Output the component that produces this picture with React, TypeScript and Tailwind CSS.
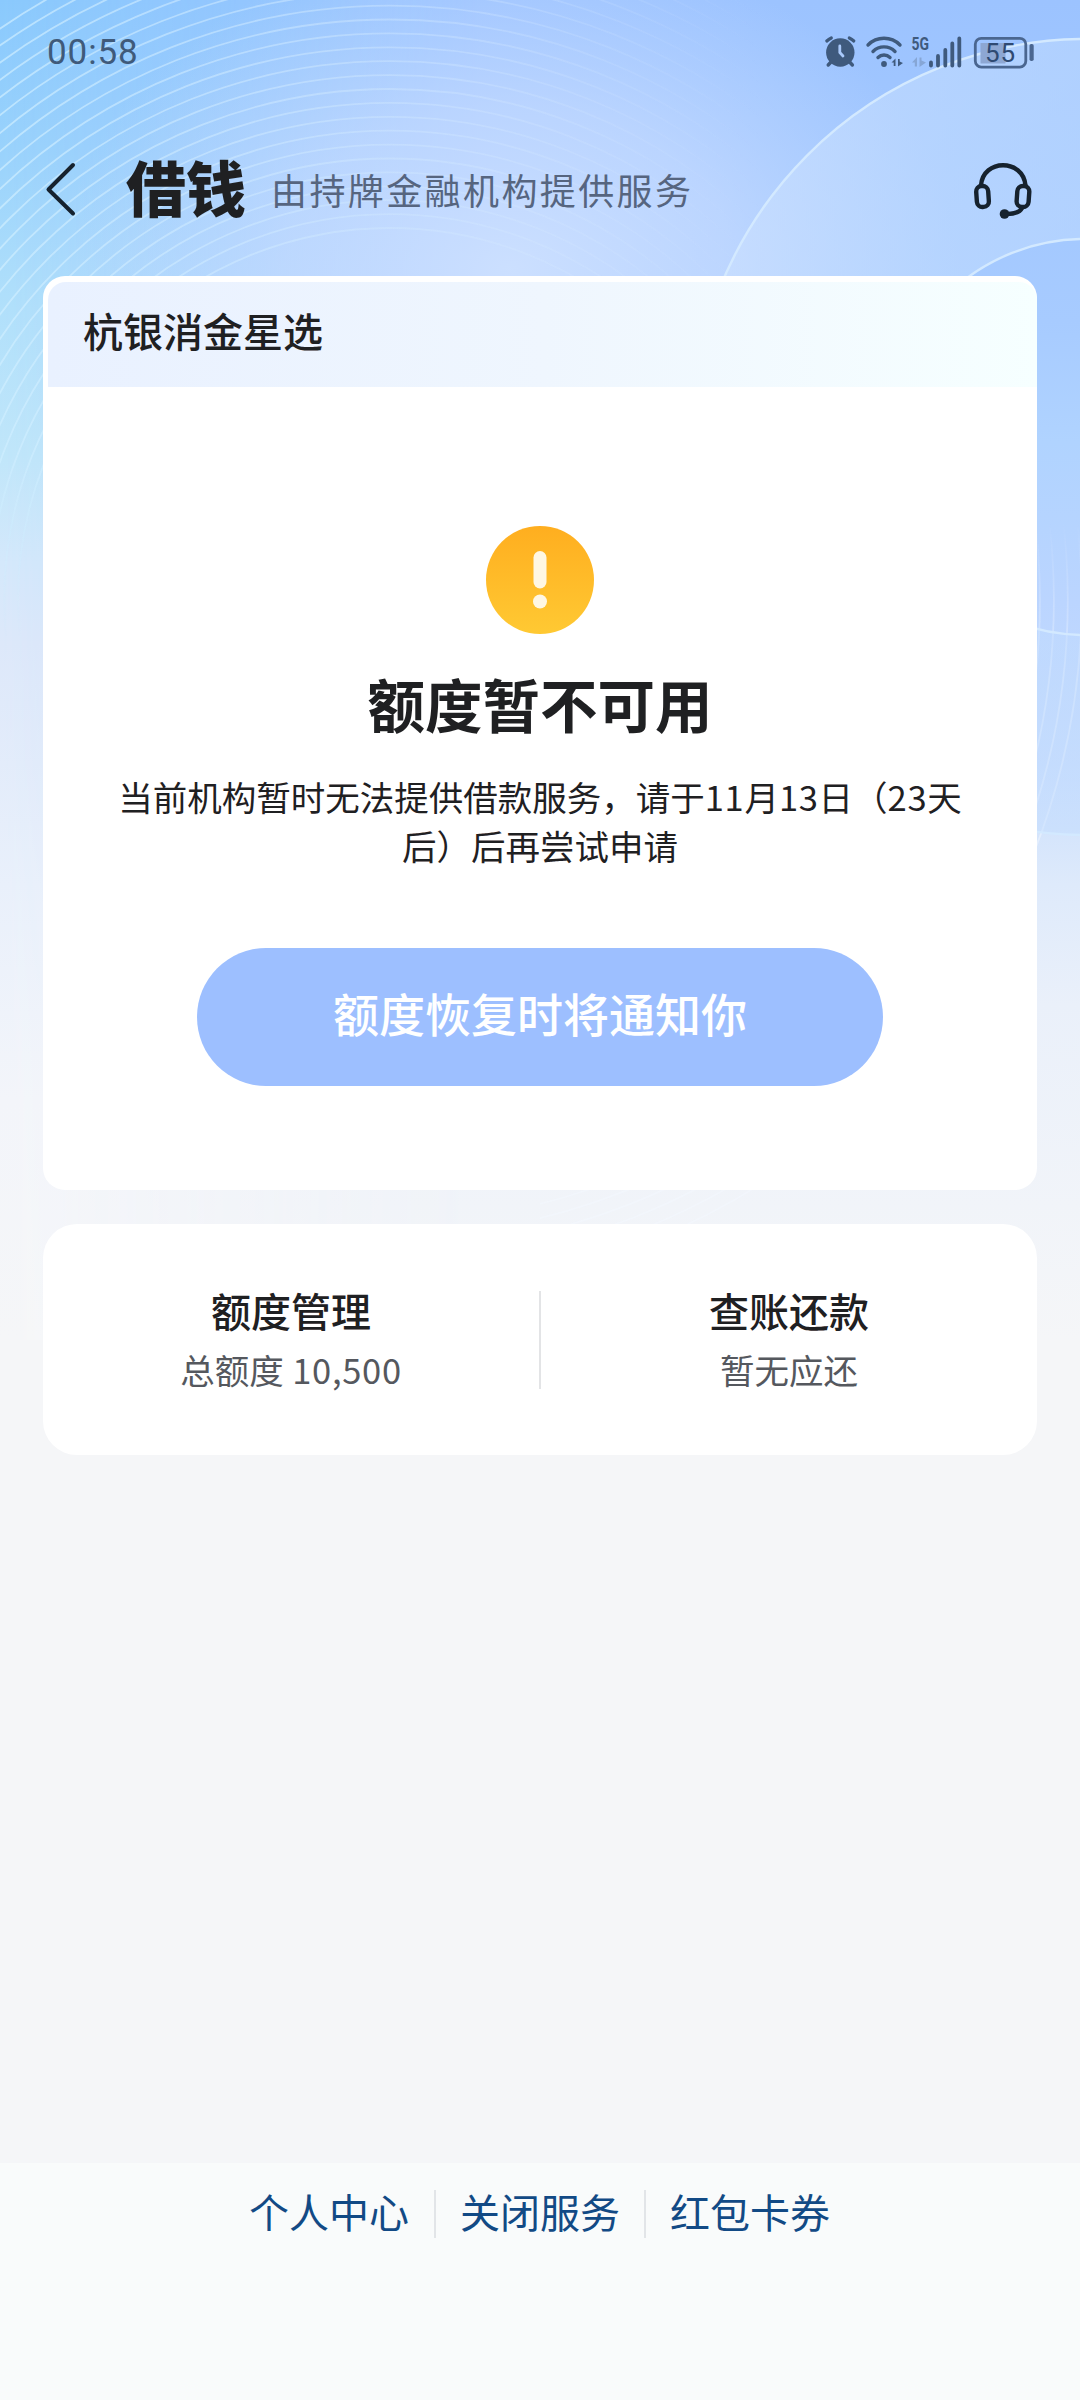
import type { ReactNode } from 'react';
import clsx from 'clsx';

const FOOTER_LINKS = ['个人中心', '关闭服务', '红包卡券'];

const ENTRIES = [
  { title: '额度管理', label: '总额度', amount: '10,500' },
  { title: '查账还款', label: '暂无应还' },
];

const RIPPLES = Array.from({ length: 24 }, (_, i) => 372 + i * 13.9);

function Backdrop() {
  return (
    <svg
      className="absolute inset-0 -z-10"
      width="1080"
      height="1340"
      viewBox="0 0 1080 1340"
      fill="none"
      aria-hidden
    >
      <defs>
        <linearGradient id="base" x1="0" y1="0" x2="0" y2="1">
          <stop offset="0" stopColor="#9cc3ff" />
          <stop offset="0.24" stopColor="#a7cbff" />
          <stop offset="0.33" stopColor="#b0d3ff" />
          <stop offset="0.45" stopColor="#bbd5ff" />
          <stop offset="0.57" stopColor="#c8ddfd" />
          <stop offset="0.66" stopColor="#deeafb" />
          <stop offset="0.75" stopColor="#eaf0fa" />
          <stop offset="0.9" stopColor="#f1f4f9" />
          <stop offset="1" stopColor="#f5f6f8" />
        </linearGradient>
        <linearGradient id="left" x1="0" y1="0" x2="0" y2="1">
          <stop offset="0" stopColor="#8ac9fd" />
          <stop offset="0.11" stopColor="#99d2fc" />
          <stop offset="0.23" stopColor="#b1e0fb" />
          <stop offset="0.34" stopColor="#c0e6fa" />
          <stop offset="0.42" stopColor="#d4e8fb" />
          <stop offset="0.48" stopColor="#dde8fa" />
          <stop offset="0.66" stopColor="#e9f0fb" />
          <stop offset="0.82" stopColor="#f3f5fa" />
          <stop offset="1" stopColor="#f5f6f8" />
        </linearGradient>
        <linearGradient id="fade" x1="0" y1="0" x2="1" y2="0">
          <stop offset="0" stopColor="#fff" />
          <stop offset="1" stopColor="#fff" stopOpacity="0" />
        </linearGradient>
        <mask id="leftMask">
          <rect width="480" height="1340" fill="url(#fade)" />
        </mask>
        <radialGradient id="glow">
          <stop offset="0" stopColor="#d0e2ff" stopOpacity="0.9" />
          <stop offset="0.5" stopColor="#c8dcff" stopOpacity="0.65" />
          <stop offset="1" stopColor="#c2d9ff" stopOpacity="0" />
        </radialGradient>
        <linearGradient id="ripple" gradientUnits="userSpaceOnUse" x1="0" y1="0" x2="760" y2="0">
          <stop offset="0" stopColor="#cfeeff" stopOpacity="0.7" />
          <stop offset="0.5" stopColor="#d0e8ff" stopOpacity="0.45" />
          <stop offset="0.75" stopColor="#d8ebff" stopOpacity="0.2" />
          <stop offset="1" stopColor="#d8ebff" stopOpacity="0" />
        </linearGradient>
        <linearGradient id="down" x1="0" y1="0" x2="0" y2="1">
          <stop offset="0.7" stopColor="#fff" />
          <stop offset="1" stopColor="#fff" stopOpacity="0" />
        </linearGradient>
        <mask id="rippleMask">
          <rect width="760" height="640" fill="url(#down)" />
        </mask>
        <linearGradient id="up" gradientUnits="userSpaceOnUse" x1="0" y1="520" x2="0" y2="680">
          <stop offset="0" stopColor="#fff" stopOpacity="0" />
          <stop offset="1" stopColor="#fff" />
        </linearGradient>
        <mask id="tailMask">
          <path d="M540 520H1080V1340H540z" fill="url(#up)" />
        </mask>
        <linearGradient id="ring" x1="0" y1="0" x2="1" y2="0.2">
          <stop offset="0" stopColor="#cfe2ff" stopOpacity="0.65" />
          <stop offset="0.35" stopColor="#c0dbff" stopOpacity="0.6" />
          <stop offset="0.6" stopColor="#c0dbff" stopOpacity="0.45" />
        </linearGradient>
      </defs>
      <rect width="1080" height="1340" fill="url(#base)" />
      <rect width="480" height="1340" fill="url(#left)" mask="url(#leftMask)" />
      <ellipse cx="510" cy="270" rx="450" ry="330" fill="url(#glow)" />
      <g stroke="url(#ripple)" strokeWidth="1.8" mask="url(#rippleMask)">
        {RIPPLES.map((r) => (
          <circle key={r} cx="390" cy="600" r={r} />
        ))}
      </g>
      <g stroke="#f4f9ff" strokeOpacity="0.45" strokeWidth="1.8" mask="url(#tailMask)">
        {RIPPLES.map((r) => (
          <circle key={r} cx="390" cy="600" r={r} />
        ))}
      </g>
      <path
        fillRule="evenodd"
        fill="url(#ring)"
        d="M691 437a396 398 0 1 0 792 0a396 398 0 1 0-792 0zM887 437a198 198 0 1 0 396 0a198 198 0 1 0-396 0z"
      />
      <g stroke="#d3e9ff" strokeWidth="2.4">
        <ellipse cx="1087" cy="437" rx="396" ry="398" />
        <circle cx="1085" cy="437" r="198" />
      </g>
    </svg>
  );
}

function StatusIcons() {
  return (
    <svg width="214" height="36" viewBox="822 34 214 36" fill="none" aria-hidden>
      {/* alarm */}
      <g stroke="#3f5a7d" strokeLinecap="round">
        <circle cx="840.3" cy="52.5" r="14.2" fill="#3f5a7d" stroke="none" />
        <path d="M826.8 41a17 17 0 0 1 4.500-3M849.300 38a17 17 0 0 1 4.500 3" strokeWidth="3.2" />
        <path d="M831 62l-2.800 3M849.600 62l2.800 3" strokeWidth="3.4" />
        <path d="M839.8 46v6.500l3.200 3.500" stroke="#a9c9fb" strokeWidth="2.8" strokeLinejoin="round" />
      </g>
      {/* wifi */}
      <g stroke="#3f5a7d" strokeWidth="3.4" strokeLinecap="round">
        <path d="M868 45a22.500 22.500 0 0 1 32 0" />
        <path d="M873 51.500a15.500 15.500 0 0 1 22 0" />
        <path d="M878 57.500a8.500 8.500 0 0 1 12 0" />
        <circle cx="884" cy="64" r="2.9" fill="#3f5a7d" stroke="none" />
      </g>
      <path d="M891.500 62.500l4-4v7.500h-1.800v-3.500zM898 66.500v-7.500h1.700v2.500l3.300 1.500z" fill="#3f5a7d" />
      {/* mobile data */}
      <path d="M912 62.500l5-5.500v9.500h-2.200v-4zM919.500 67v-9.500h2v3l4.500 2z" fill="#86a6d6" />
      <path
        d="M931 62.500v3M938 56v9.500M945.300 50v15.500M952.300 43.500v22M959.300 38.500v27"
        stroke="#3f5a7d"
        strokeWidth="3.8"
        strokeLinecap="round"
      />
      <text
        x="911.500"
        y="50"
        fill="#3f5a7d"
        fontFamily="Roboto, sans-serif"
        fontSize="17.500"
        fontWeight="700"
        textLength="17.500"
        lengthAdjust="spacingAndGlyphs"
      >
        5G
      </text>
      {/* battery */}
      <path d="M980.500 43h25v20.500h-25z" fill="#8da7d3" />
      <rect x="975.300" y="38.300" width="50.500" height="28.800" rx="6" stroke="#4a6690" strokeWidth="2.800" />
      <rect x="1029.500" y="44" width="4.200" height="17" rx="1.800" fill="#4a6690" />
      <text
        x="985"
        y="61.500"
        fill="#2f4a72"
        fontFamily="Roboto, sans-serif"
        fontSize="26"
        textLength="30"
      >
        55
      </text>
    </svg>
  );
}

function HeadsetIcon() {
  return (
    <svg width="60" height="60" viewBox="972 160 60 60" fill="none" stroke="#16222e" strokeLinecap="round" aria-hidden>
      <path d="M981 185.500C983 158.500 1023 158.500 1025.500 185.500" strokeWidth="4.400" />
      <rect x="976.500" y="186" width="12" height="21" rx="5.500" strokeWidth="4.400" transform="rotate(-4 982 196)" />
      <rect x="1017" y="186" width="12" height="21" rx="5.500" strokeWidth="4.400" transform="rotate(4 1023 196)" />
      <path d="M1022 208c-2 4-6 6-15 6" strokeWidth="4.400" />
      <circle cx="1004.500" cy="214" r="4.800" fill="#16222e" stroke="none" />
    </svg>
  );
}

function Card({ className, children }: { className?: string; children: ReactNode }) {
  return <section className={clsx('mx-[43px] bg-white', className)}>{children}</section>;
}

function Num({ children }: { children: ReactNode }) {
  return <span className="tracking-[0.7px]">{children}</span>;
}

export default function App() {
  return (
    <div className="relative isolate flex h-[2400px] w-[1080px] flex-col overflow-hidden bg-[#f5f6f8] font-['Noto_Sans_CJK_SC',sans-serif] text-[#1f2022]">
      <Backdrop />

      <div className="flex h-[104px] items-center justify-between pr-[44px] pl-[47px]">
        <span className="font-[Roboto,sans-serif] text-[35px] leading-none tracking-[0.9px] text-[#3f5a7a]">
          00:58
        </span>
        <StatusIcons />
      </div>

      <header className="flex h-[172px] items-center pr-[48px] pl-[44px]">
        <svg width="34" height="60" viewBox="44 160 34 60" fill="none" aria-hidden>
          <path
            d="M73 165L48.500 189.500L73 213.500"
            stroke="#16222e"
            strokeWidth="4"
            strokeLinecap="round"
            strokeLinejoin="round"
          />
        </svg>
        <h1 className="ml-[48px] pb-[8px] text-[60px] leading-none font-black">借钱</h1>
        <p className="ml-[25px] pb-[3px] text-[36px] leading-none tracking-[2.4px] text-[#56657f]">
          由持牌金融机构提供服务
        </p>
        <div className="ml-auto">
          <HeadsetIcon />
        </div>
      </header>

      <Card className="h-[914px] rounded-[22px] pt-[6px] pl-[5px]">
        <div className="flex h-[105px] items-center rounded-t-[18px] bg-linear-to-r from-[#e9f1ff] via-[#eff6fe] to-[#f6ffff] pb-[9px] pl-[35px]">
          <h2 className="text-[40px] leading-none font-medium">杭银消金星选</h2>
        </div>
        <div className="flex flex-col items-center pt-[139px] pr-[5px]">
          <svg width="108" height="108" viewBox="0 0 108 108" aria-hidden>
            <defs>
              <linearGradient id="warn" x1="0" y1="0" x2="0" y2="1">
                <stop offset="0" stopColor="#ffae1f" />
                <stop offset="1" stopColor="#ffc933" />
              </linearGradient>
            </defs>
            <circle cx="54" cy="54" r="54" fill="url(#warn)" />
            <rect x="47.500" y="25" width="13" height="37.500" rx="6.500" fill="#fff7e3" />
            <circle cx="54" cy="75.500" r="7" fill="#fff7e3" />
          </svg>
          <h3 className="mt-[37px] text-[57.500px] leading-[64px] font-bold">额度暂不可用</h3>
          <p className="mt-[37px] text-center text-[34.500px] leading-[49px]">
            当前机构暂时无法提供借款服务，请于<Num>11</Num>月<Num>13</Num>日（<Num>23</Num>天
            <br />
            后）后再尝试申请
          </p>
          <button
            type="button"
            className="mt-[78px] h-[138px] w-[686px] rounded-full bg-[#9dbfff] pb-[10px] text-[46px] font-medium text-white"
          >
            额度恢复时将通知你
          </button>
        </div>
      </Card>

      <Card className="mt-[34px] flex h-[231px] items-center rounded-[34px]">
        {ENTRIES.map((entry, i) => (
          <div
            key={entry.title}
            className={clsx(
              'flex h-[98px] flex-1 flex-col items-center justify-between pb-[3px]',
              i > 0 && 'border-l-2 border-[#e3e4e6]',
            )}
          >
            <span className="-mt-px text-[40px] leading-[40px] font-medium">{entry.title}</span>
            <span className="text-[34.500px] leading-[34px] text-[#55585e]">
              {entry.label}
              {entry.amount && <Num> {entry.amount}</Num>}
            </span>
          </div>
        ))}
      </Card>

      <footer className="mt-auto h-[237px] bg-[#f9fbfb] pt-[27px]">
        <nav className="flex h-[48px] justify-center pr-[2px]">
          {FOOTER_LINKS.map((link, i) => (
            <a
              key={link}
              className={clsx(
                'flex w-[210px] items-center justify-center pb-[6px] text-[40px] leading-none text-[#124a85]',
                i > 0 && 'border-l-2 border-[#e2e5e8]',
              )}
            >
              {link}
            </a>
          ))}
        </nav>
      </footer>
    </div>
  );
}
